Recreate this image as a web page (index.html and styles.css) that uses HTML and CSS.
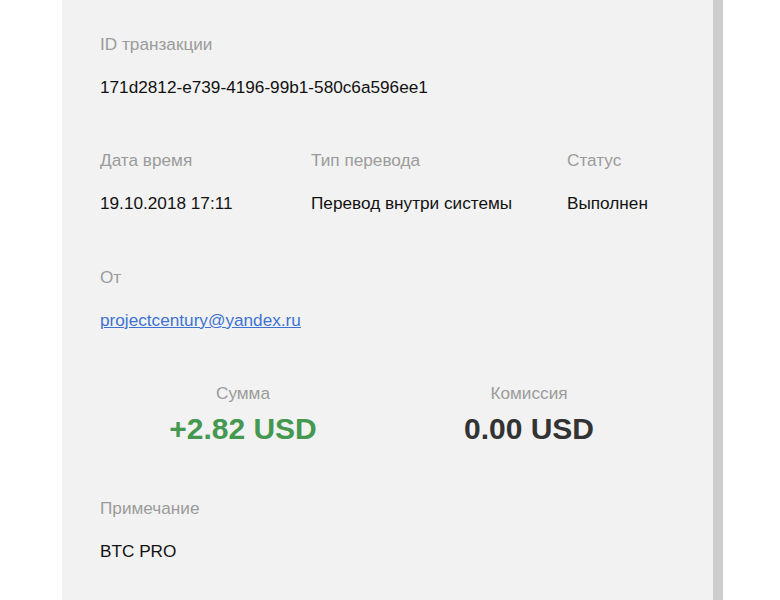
FILE: index.html
```html
<!DOCTYPE html>
<html lang="ru">
<head>
<meta charset="utf-8">
<link rel="stylesheet" href="styles.css">
</head>
<body>
<div class="page">
  <div class="card">
    <div class="field">
      <div class="label">ID транзакции</div>
      <div class="value">171d2812-e739-4196-99b1-580c6a596ee1</div>
    </div>
    <div class="row3">
      <div class="field">
        <div class="label">Дата время</div>
        <div class="value">19.10.2018 17:11</div>
      </div>
      <div class="field">
        <div class="label">Тип перевода</div>
        <div class="value">Перевод внутри системы</div>
      </div>
      <div class="field">
        <div class="label">Статус</div>
        <div class="value">Выполнен</div>
      </div>
    </div>
    <div class="field from">
      <div class="label">От</div>
      <div class="value"><a class="link" href="#">projectcentury@yandex.ru</a></div>
    </div>
    <div class="amounts">
      <div class="amount-col">
        <div class="label">Сумма</div>
        <div class="amount plus">+2.82 USD</div>
      </div>
      <div class="amount-col">
        <div class="label">Комиссия</div>
        <div class="amount">0.00 USD</div>
      </div>
    </div>
    <div class="field note">
      <div class="label">Примечание</div>
      <div class="value">BTC PRO</div>
    </div>
  </div>
</div>
</body>
</html>
```

FILE: styles.css
```css
html, body {
  margin: 0;
  padding: 0;
  background: #ffffff;
  height: 600px;
  overflow: hidden;
}
body {
  font-family: "Liberation Sans", Arial, sans-serif;
  font-size: 17.2px;
  line-height: 20px;
}
.page {
  padding-left: 62px;
  display: flex;
}
.card {
  box-sizing: border-box;
  width: 661px;
  height: 600px;
  overflow: hidden;
  background: #f2f2f2;
  border-right: 10px solid #cdcdcd;
  padding: 34px 41px 0 38px;
  display: flex;
  flex-direction: column;
  gap: 53px;
}
.field {
  display: flex;
  flex-direction: column;
  gap: 23px;
}
.from {
  margin-top: 1px;
}
.note {
  margin-top: -1px;
}
.label {
  color: #9b9b9b;
}
.value {
  color: #111111;
}
.link {
  color: #3d72d3;
  text-decoration: underline;
}
.row3 {
  display: grid;
  grid-template-columns: 211px 256px auto;
}
.amounts {
  display: grid;
  grid-template-columns: 1fr 1fr;
}
.amount-col {
  display: flex;
  flex-direction: column;
  align-items: center;
  gap: 9px;
}
.amount {
  font-size: 30px;
  line-height: 34px;
  font-weight: bold;
  color: #333333;
}
.amount.plus {
  color: #45984f;
}
```
